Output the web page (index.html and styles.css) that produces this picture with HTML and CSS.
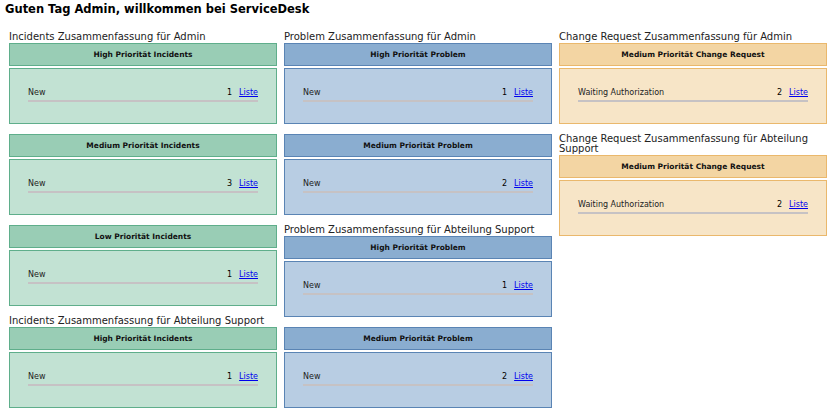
FILE: index.html
```html
<!DOCTYPE html>
<html lang="de">
<head>
    <meta charset="UTF-8">
    <title>ServiceDesk</title>
    <link rel="stylesheet" href="styles.css">
</head>
<body>
    <h1 class="greeting">Guten Tag Admin, willkommen bei ServiceDesk</h1>

    <div class="dashboard">
        <!-- Incidents -->
        <div class="column">
            <div class="summary-title">Incidents Zusammenfassung für Admin</div>
            <div class="box incident">
                <div class="box-head">High Priorität Incidents</div>
                <div class="box-body">
                    <div class="row"><span class="label">New</span><span class="count">1</span><a href="#">Liste</a></div>
                </div>
            </div>
            <div class="box incident">
                <div class="box-head">Medium Priorität Incidents</div>
                <div class="box-body">
                    <div class="row"><span class="label">New</span><span class="count">3</span><a href="#">Liste</a></div>
                </div>
            </div>
            <div class="box incident">
                <div class="box-head">Low Priorität Incidents</div>
                <div class="box-body">
                    <div class="row"><span class="label">New</span><span class="count">1</span><a href="#">Liste</a></div>
                </div>
            </div>

            <div class="summary-title">Incidents Zusammenfassung für Abteilung Support</div>
            <div class="box incident">
                <div class="box-head">High Priorität Incidents</div>
                <div class="box-body">
                    <div class="row"><span class="label">New</span><span class="count">1</span><a href="#">Liste</a></div>
                </div>
            </div>
        </div>

        <!-- Problem -->
        <div class="column">
            <div class="summary-title">Problem Zusammenfassung für Admin</div>
            <div class="box problem">
                <div class="box-head">High Priorität Problem</div>
                <div class="box-body">
                    <div class="row"><span class="label">New</span><span class="count">1</span><a href="#">Liste</a></div>
                </div>
            </div>
            <div class="box problem">
                <div class="box-head">Medium Priorität Problem</div>
                <div class="box-body">
                    <div class="row"><span class="label">New</span><span class="count">2</span><a href="#">Liste</a></div>
                </div>
            </div>

            <div class="summary-title">Problem Zusammenfassung für Abteilung Support</div>
            <div class="box problem">
                <div class="box-head">High Priorität Problem</div>
                <div class="box-body">
                    <div class="row"><span class="label">New</span><span class="count">1</span><a href="#">Liste</a></div>
                </div>
            </div>
            <div class="box problem">
                <div class="box-head">Medium Priorität Problem</div>
                <div class="box-body">
                    <div class="row"><span class="label">New</span><span class="count">2</span><a href="#">Liste</a></div>
                </div>
            </div>
        </div>

        <!-- Change Request -->
        <div class="column">
            <div class="summary-title">Change Request Zusammenfassung für Admin</div>
            <div class="box change">
                <div class="box-head">Medium Priorität Change Request</div>
                <div class="box-body">
                    <div class="row"><span class="label">Waiting Authorization</span><span class="count">2</span><a href="#">Liste</a></div>
                </div>
            </div>

            <div class="summary-title">Change Request Zusammenfassung für Abteilung Support</div>
            <div class="box change">
                <div class="box-head">Medium Priorität Change Request</div>
                <div class="box-body">
                    <div class="row"><span class="label">Waiting Authorization</span><span class="count">2</span><a href="#">Liste</a></div>
                </div>
            </div>
        </div>
    </div>
</body>
</html>
```

FILE: styles.css
```css
* {
    margin: 0;
    padding: 0;
    box-sizing: border-box;
}

body {
    font-family: 'DejaVu Sans', Verdana, sans-serif;
    color: #000;
    background: #fff;
}

.greeting {
    font-size: 11.5px;
    font-weight: bold;
    line-height: 16px;
    padding: 1px 0 0 5px;
}

.dashboard {
    display: grid;
    grid-template-columns: 268px 268px 268px;
    column-gap: 7px;
    padding: 15px 0 0 9px;
    align-items: start;
}

.column {
    display: flex;
    flex-direction: column;
}

.summary-title {
    font-size: 10px;
    line-height: 10px;
    color: #222;
    padding-bottom: 1px;
}

.box {
    margin-bottom: 10px;
}

.box-head {
    height: 23px;
    border: 1px solid;
    font-size: 7.5px;
    font-weight: bold;
    text-align: center;
    line-height: 21px;
    color: #111;
}

.box-body {
    height: 56px;
    margin-top: 2px;
    border: 1px solid;
    padding: 18px 18px 0;
}

.row {
    display: flex;
    align-items: baseline;
    font-size: 8px;
    line-height: 11px;
    padding-bottom: 2px;
    border-bottom: 2px solid #c6c2c4;
}

.label {
    flex: 1;
    color: #222;
}

.count {
    margin-right: 7px;
}

.row a {
    color: #0000ee;
}

.incident .box-head {
    background: #99cdb5;
    border-color: #5fae8b;
}

.incident .box-body {
    background: #c2e2d3;
    border-color: #5fae8b;
}

.problem .box-head {
    background: #8aadd0;
    border-color: #5a84b4;
}

.problem .box-body {
    background: #b8cde3;
    border-color: #5a84b4;
}

.change .box-head {
    background: #f3d5a3;
    border-color: #eab86c;
}

.change .box-body {
    background: #f7e5c7;
    border-color: #eab86c;
}
```
